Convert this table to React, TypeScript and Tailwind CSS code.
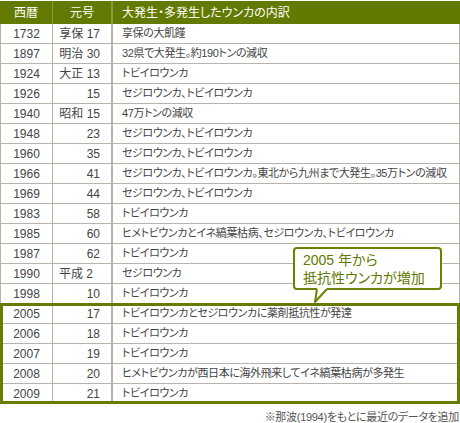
const rows: [string, string, string][] = [
  ["1732", "享保 17", "享保の大飢饉"],
  ["1897", "明治 30", "32県で大発生。約190トンの減収"],
  ["1924", "大正 13", "トビイロウンカ"],
  ["1926", "15", "セジロウンカ、トビイロウンカ"],
  ["1940", "昭和 15", "47万トンの減収"],
  ["1948", "23", "セジロウンカ、トビイロウンカ"],
  ["1960", "35", "セジロウンカ、トビイロウンカ"],
  ["1966", "41", "セジロウンカ、トビイロウンカ。東北から九州まで大発生。35万トンの減収"],
  ["1969", "44", "セジロウンカ、トビイロウンカ"],
  ["1983", "58", "トビイロウンカ"],
  ["1985", "60", "ヒメトビウンカとイネ縞葉枯病、セジロウンカ、トビイロウンカ"],
  ["1987", "62", "トビイロウンカ"],
  ["1990", "平成 2", "セジロウンカ"],
  ["1998", "10", "トビイロウンカ"],
];

const recent: [string, string, string][] = [
  ["2005", "17", "トビイロウンカとセジロウンカに薬剤抵抗性が発達"],
  ["2006", "18", "トビイロウンカ"],
  ["2007", "19", "トビイロウンカ"],
  ["2008", "20", "ヒメトビウンカが西日本に海外飛来してイネ縞葉枯病が多発生"],
  ["2009", "21", "トビイロウンカ"],
];

function Row({ year, era, note }: { year: string; era: string; note: string }) {
  // single digit era numbers keep the two-digit slot
  const short = era.endsWith(" 2");
  return (
    <div className="flex h-[20px] items-center border-b border-l border-r border-[#bab3ab]">
      <div className="flex h-full w-[52px] shrink-0 items-center justify-center border-r border-[#bab3ab]">{year}</div>
      <div
        className={
          short
            ? "flex h-full w-[60px] shrink-0 items-center justify-end border-r-2 border-[#bab3ab] pr-[18px]"
            : "flex h-full w-[60px] shrink-0 items-center justify-end border-r-2 border-[#bab3ab] pr-[11px]"
        }
      >
        {era}
      </div>
      <div className="min-w-0 flex-1 whitespace-nowrap pl-[9px] text-[11px] tracking-[-0.4px] [font-feature-settings:'palt']">
        {note}
      </div>
    </div>
  );
}

export default function App() {
  return (
    <div className="relative h-[423px] w-[460px] overflow-hidden bg-white font-['Liberation_Sans','Noto_Sans_CJK_JP',sans-serif] text-[12px] text-[#444]">
      {/* Header */}
      <div className="mt-px flex h-[23px] items-center bg-[#637a00] text-white">
        <div className="flex h-full w-[53px] shrink-0 items-center justify-center border-r border-[#8a9a40]">西暦</div>
        <div className="flex h-full w-[60px] shrink-0 items-center justify-center border-r-2 border-[#8a9a40]">元号</div>
        <div className="flex-1 pl-[9px] [font-feature-settings:'palt']">大発生・多発生したウンカの内訳</div>
      </div>

      {rows.map(([y, e, n]) => (
        <Row key={y} year={y} era={e} note={n} />
      ))}

      {/* Recent years, framed in green */}
      <div className="relative">
        {recent.map(([y, e, n]) => (
          <Row key={y} year={y} era={e} note={n} />
        ))}
        <div className="pointer-events-none absolute -top-px right-0 bottom-0 left-0 border-[3px] border-[#667c00]" />
      </div>

      <div className="mt-[7px] pr-px text-right text-[11px] leading-[13px] tracking-[-0.3px] text-[#555] [font-feature-settings:'palt']">
        ※那波(1994)をもとに最近のデータを追加
      </div>

      {/* Callout */}
      <div className="absolute top-[247px] left-[293px] h-[43px] w-[149px] rounded-[4px] border-2 border-[#6b8200] bg-white px-[8px] pt-[2px] text-[14px] leading-[18px] text-[#5e7a00] [font-feature-settings:'palt']">
        <div>2005 年から</div>
        <div>抵抗性ウンカが増加</div>
      </div>
      <svg className="absolute top-[286px] left-[310px]" width="20" height="18" viewBox="0 0 20 18">
        <polygon points="7,1 17,1 17,3 5,16 7,3" fill="white" />
        <polyline points="7,3 5,16 17,3" fill="none" stroke="#6b8200" strokeWidth="2" strokeLinejoin="round" />
      </svg>
    </div>
  );
}
